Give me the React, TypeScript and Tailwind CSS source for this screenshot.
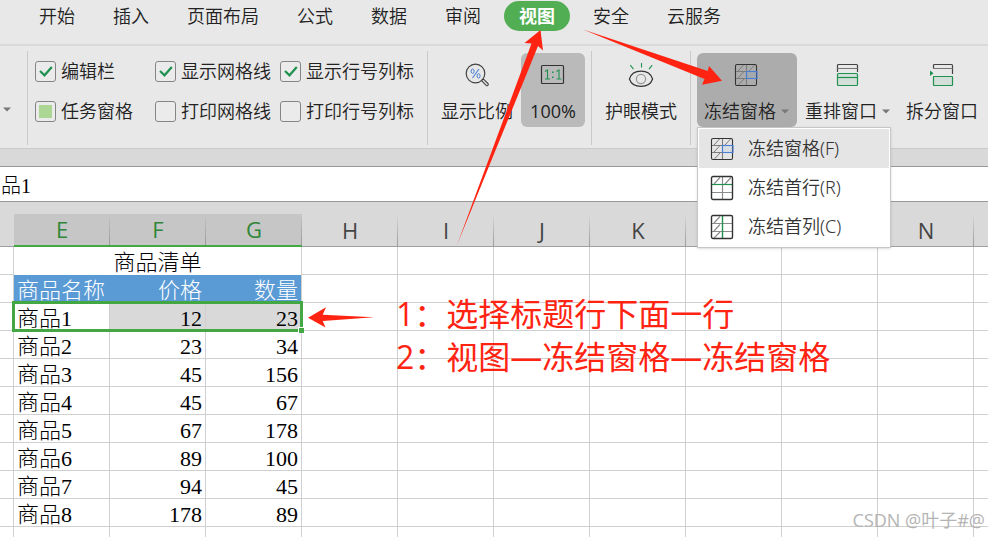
import { useState, type ReactNode } from 'react'

const tabs = ['开始', '插入', '页面布局', '公式', '数据', '审阅', '视图', '安全', '云服务']

const columns = ['E', 'F', 'G', 'H', 'I', 'J', 'K', 'L', 'M', 'N', '']

const goods = [
  { name: '商品1', price: 12, count: 23 },
  { name: '商品2', price: 23, count: 34 },
  { name: '商品3', price: 45, count: 156 },
  { name: '商品4', price: 45, count: 67 },
  { name: '商品5', price: 67, count: 178 },
  { name: '商品6', price: 89, count: 100 },
  { name: '商品7', price: 94, count: 45 },
  { name: '商品8', price: 178, count: 89 },
]

const toggles = [
  { label: '编辑栏', state: 'on' },
  { label: '显示网格线', state: 'on' },
  { label: '显示行号列标', state: 'on' },
  { label: '任务窗格', state: 'partial' },
  { label: '打印网格线', state: 'off' },
  { label: '打印行号列标', state: 'off' },
]

function ZoomIcon() {
  return (
    <svg width="26" height="26" viewBox="0 0 26 26" fill="none">
      <circle cx="11.5" cy="11.5" r="9.3" stroke="#444" strokeWidth="1.2" />
      <path d="M17.5 18.5l1.8-1.6 4.6 4.6a1.2 1.2 0 0 1-1.8 1.8z" stroke="#444" strokeWidth="1.1" />
      <path d="M15 7L8.5 16" stroke="#4a7fd6" strokeWidth="1.1" />
      <ellipse cx="8.6" cy="9.2" rx="1.5" ry="2.2" stroke="#4a7fd6" />
      <ellipse cx="14.6" cy="13.9" rx="1.5" ry="2.2" stroke="#4a7fd6" />
    </svg>
  )
}

function ActualSizeIcon() {
  return (
    <svg width="26" height="26" viewBox="0 0 26 26" fill="none">
      <rect x="1.5" y="3.5" width="22" height="18" rx="1" stroke="#333" strokeWidth="1.2" />
      <path d="M5 9.5l2.5-1.5v9M5 17h5M16.5 9.5l2.5-1.5v9M16.5 17h5" stroke="#1f9150" strokeWidth="1.1" />
      <path d="M12 9.5h1.6v1.6h-1.6zM12 14.5h1.6v1.6h-1.6z" fill="#1f9150" />
    </svg>
  )
}

function EyeIcon() {
  return (
    <svg width="26" height="26" viewBox="0 0 26 26" fill="none">
      <path d="M2.3 3.2l3.2 4M13.5 1v4.5M24.2 3.2l-3.2 4" stroke="#1f9150" strokeWidth="1.1" />
      <path d="M1.4 17C3 12 7.5 9.2 13 9.2S23 12 24.6 17C23 21.8 18.5 24.4 13 24.4S3 21.8 1.4 17z" stroke="#333" strokeWidth="1.2" />
      <circle cx="13" cy="17" r="4.6" stroke="#999" strokeWidth="1.2" />
    </svg>
  )
}

function FreezePanesIcon() {
  return (
    <svg width="26" height="26" viewBox="0 0 26 26" fill="none">
      <path d="M1.5 9.5h11M1.5 16.5h11M12.5 2.5v21" stroke="#7c7c7c" strokeWidth="1.1" />
      <path d="M4 9l5.5-6M15 9l5.5-6M4 16l6-6.5M4 23.5l6-6.5" stroke="#7c7c7c" />
      <rect x="1.5" y="2.5" width="21" height="21" rx="1.5" stroke="#333" strokeWidth="1.1" />
      <rect x="12.5" y="9.5" width="10.5" height="7" fill="#4a86e8" fillOpacity="0.08" stroke="#4a7fd6" strokeWidth="1.1" />
    </svg>
  )
}

function FreezeRowIcon() {
  return (
    <svg width="26" height="26" viewBox="0 0 26 26" fill="none">
      <path d="M1.5 17.5h21M12.5 2v22" stroke="#8c8c8c" strokeWidth="1.2" />
      <path d="M4 9l6-6.5M15 9l6-6.5" stroke="#8c8c8c" strokeWidth="1.2" />
      <path d="M1.5 9.5h21" stroke="#1f9150" strokeWidth="1.2" />
      <rect x="1.5" y="1.5" width="21" height="23" rx="1.5" stroke="#333" strokeWidth="1.4" />
    </svg>
  )
}

function FreezeColumnIcon() {
  return (
    <svg width="26" height="26" viewBox="0 0 26 26" fill="none">
      <path d="M1.5 9.5h21M1.5 17.5h21" stroke="#8c8c8c" strokeWidth="1.2" />
      <path d="M4 9l6-6.5M4 17l6-6.5M4 24l6-6" stroke="#8c8c8c" strokeWidth="1.2" />
      <path d="M12.5 2v22" stroke="#1f9150" strokeWidth="1.4" />
      <rect x="1.5" y="1.5" width="21" height="23" rx="1.5" stroke="#333" strokeWidth="1.4" />
    </svg>
  )
}

function ArrangeIcon() {
  return (
    <svg width="26" height="26" viewBox="0 0 26 26" fill="none">
      <path d="M2.5 10V3.5a1 1 0 0 1 1-1h18a1 1 0 0 1 1 1V10" stroke="#444" strokeWidth="1.2" />
      <path d="M2.5 6.5h20" stroke="#777" />
      <rect x="2.5" y="11.5" width="20" height="12" rx="1" fill="#1f9150" fillOpacity="0.1" stroke="#1f9150" strokeWidth="1.2" />
      <path d="M2.5 15.5h20" stroke="#1f9150" strokeWidth="1.2" />
    </svg>
  )
}

function SplitIcon() {
  return (
    <svg width="26" height="26" viewBox="0 0 26 26" fill="none">
      <path d="M4.5 6.5V3.5a1 1 0 0 1 1-1h17a1 1 0 0 1 1 1V12" stroke="#444" strokeWidth="1.2" />
      <path d="M4.5 6.5h19" stroke="#777" />
      <path d="M1 8.5l3.5 2.8L1 14z" fill="#1f9150" />
      <rect x="4.5" y="14.5" width="19" height="9" rx="0.5" fill="#1f9150" fillOpacity="0.1" stroke="#1f9150" strokeWidth="1.2" />
    </svg>
  )
}

function Caret() {
  return (
    <svg width="9" height="5" viewBox="0 0 9 5">
      <path d="M0 0.5h8L4 4.5z" fill="#777" />
    </svg>
  )
}

function Separator() {
  return <div className="mt-[5px] h-[94px] w-px shrink-0 bg-[#c9c9c9]" />
}

function Toggle({ label, state }: { label: string; state: string }) {
  return (
    <label className="flex h-10 items-center gap-[5px]">
      <span className="relative flex">
        <input
          type="checkbox"
          defaultChecked={state === 'on'}
          className="h-[21px] w-[21px] appearance-none rounded-[3px] border border-[#858585] bg-[#ebebeb]"
        />
        {state === 'on' && (
          <svg className="absolute top-0 left-0" width="21" height="21" viewBox="0 0 21 21" fill="none">
            <path d="M5 10l4.5 4.3L16.8 6" stroke="#1f9150" strokeWidth="2.2" />
          </svg>
        )}
        {state === 'partial' && <span className="absolute top-1 left-1 h-[13px] w-[13px] bg-[#abd693]" />}
      </span>
      {label}
    </label>
  )
}

interface ToolButtonProps {
  icon: ReactNode
  label: string
  active?: string
  caret?: boolean
  onClick?: () => void
}

function ToolButton({ icon, label, active = '', caret, onClick }: ToolButtonProps) {
  return (
    <button
      onClick={onClick}
      className={`flex shrink-0 flex-col items-center gap-[11px] rounded-md px-[7px] pt-[9px] pb-1 whitespace-nowrap ${active}`}
    >
      {icon}
      <span className="flex items-center gap-[5px] leading-6">
        {label}
        {caret && <Caret />}
      </span>
    </button>
  )
}

const freezeItems = [
  { label: '冻结窗格(F)', icon: <FreezePanesIcon /> },
  { label: '冻结首行(R)', icon: <FreezeRowIcon /> },
  { label: '冻结首列(C)', icon: <FreezeColumnIcon /> },
]

function FreezeMenu() {
  return (
    <div className="absolute top-full left-0 z-10 w-[194px] border border-[#c6c6c6] bg-white p-px shadow-sm">
      {freezeItems.map((item, i) => (
        <button
          key={item.label}
          className={`flex h-[39px] w-full items-center gap-3 pl-[11px] font-['Noto_Sans','Noto_Sans_CJK_SC',sans-serif] text-[#333] ${i === 0 ? 'bg-[#e5e5e5]' : 'bg-white'}`}
        >
          {item.icon}
          {item.label}
        </button>
      ))}
    </div>
  )
}

function Ribbon() {
  const [menuOpen, setMenuOpen] = useState(true)

  return (
    <div className="flex h-[103px] items-start border-b border-[#cbcbcb] bg-[#e8e8e8]">
      <button aria-label="更多" className="flex h-[103px] w-[27px] shrink-0 items-center pt-6 pl-[3px]">
        <Caret />
      </button>
      <Separator />
      <div className="grid shrink-0 grid-cols-[120px_125px_auto] pt-[5px] pr-[13px] pl-[7px] whitespace-nowrap">
        {toggles.map((t) => (
          <Toggle key={t.label} label={t.label} state={t.state} />
        ))}
      </div>
      <Separator />
      <div className="flex shrink-0 gap-px px-[6px] pt-[7px]">
        <ToolButton icon={<ZoomIcon />} label="显示比例" />
        <ToolButton icon={<ActualSizeIcon />} label="100%" active="w-16 bg-[#bababa] font-normal" />
      </div>
      <Separator />
      <div className="flex shrink-0 px-[6px] pt-[7px]">
        <ToolButton icon={<EyeIcon />} label="护眼模式" />
      </div>
      <Separator />
      <div className="flex shrink-0 gap-px pt-[7px] pl-[6px]">
        <div className="relative">
          <ToolButton
            icon={<FreezePanesIcon />}
            label="冻结窗格"
            active="bg-[#acacac]"
            caret
            onClick={() => setMenuOpen(!menuOpen)}
          />
          {menuOpen && <FreezeMenu />}
        </div>
        <ToolButton icon={<ArrangeIcon />} label="重排窗口" caret />
        <ToolButton icon={<SplitIcon />} label="拆分窗口" />
      </div>
    </div>
  )
}

function Cell({ children, className = '' }: { children?: ReactNode; className?: string }) {
  return <td className={`h-7 border-r border-b border-[#d0d0d0] p-0 ${className}`}>{children}</td>
}

function EmptyCells({ count }: { count: number }) {
  return (
    <>
      {Array.from({ length: count }, (_, i) => (
        <Cell key={i} />
      ))}
    </>
  )
}

function Sheet() {
  return (
    <div className="flex-1 overflow-hidden bg-white">
      <div className="h-3 bg-[#d9d9d9]" />
      <table className="w-[1070px] table-fixed border-separate border-spacing-0 font-['Liberation_Serif','Noto_Sans_CJK_SC',serif] text-[22px] leading-[23px] font-light text-black">
        <colgroup>
          <col className="w-[14px]" />
          {columns.map((c) => (
            <col key={c} className="w-24" />
          ))}
        </colgroup>
        <thead>
          <tr className="font-['Open_Sans',sans-serif]">
            <th className="h-[33px] border-b border-[#a0a0a0] bg-[#d9d9d9] p-0" />
            {columns.map((c, i) => (
              <th
                key={c}
                className={`h-[33px] bg-[linear-gradient(to_bottom,transparent,#999)] bg-[length:1px_100%] bg-right bg-no-repeat p-0 font-normal ${
                  i < 3 ? 'border-b-2 border-[#43a843] bg-[#c6c6c6] text-[#2e8636]' : 'border-b border-[#a0a0a0] bg-[#d9d9d9] text-[#444]'
                }`}
              >
                {c}
              </th>
            ))}
          </tr>
        </thead>
        <tbody>
          <tr>
            <Cell />
            <td colSpan={3} className="h-7 border-r border-[#d0d0d0] p-0 pt-0.5 text-center">
              商品清单
            </td>
            <EmptyCells count={8} />
          </tr>
          <tr>
            <Cell />
            <td className="h-7 bg-[#5b9bd5] p-0 pt-0.5 pl-[3px] text-white">商品名称</td>
            <td className="bg-[#5b9bd5] p-0 pt-0.5 pr-1 text-right text-white">价格</td>
            <td className="border-r border-[#d0d0d0] bg-[#5b9bd5] p-0 pt-0.5 pr-[3px] text-right text-white">数量</td>
            <EmptyCells count={8} />
          </tr>
          {goods.map((g, i) => (
            <tr key={g.name}>
              <Cell className="relative">
                {i === 0 && (
                  <div className="absolute -top-0.5 left-3 z-10 h-[31px] w-[291px] border-3 border-[#43a843]">
                    <span className="absolute -right-1 -bottom-1 h-[6px] w-[6px] border-t border-l border-white bg-[#43a843]" />
                  </div>
                )}
              </Cell>
              <Cell className="pt-1 pl-[3px]">{g.name}</Cell>
              <Cell className={`pt-1 pr-[3px] text-right ${i === 0 ? 'bg-[#d9d9d9]' : ''}`}>{g.price}</Cell>
              <Cell className={`pt-1 pr-[3px] text-right ${i === 0 ? 'bg-[#d9d9d9]' : ''}`}>{g.count}</Cell>
              <EmptyCells count={8} />
            </tr>
          ))}
          <tr>
            <EmptyCells count={12} />
          </tr>
        </tbody>
      </table>
    </div>
  )
}

// Red tutorial marks drawn over the sheet
function Annotations() {
  return (
    <div className="pointer-events-none absolute inset-0 z-20">
      <svg className="absolute top-0 left-0" width="988" height="400" viewBox="0 0 988 400" fill="#ff2412">
        <path d="M540.5 30L524.5 43 531.5 43.5 457 245 538 46 543 50.5z" />
        <path d="M722 80.7L709 66 707.7 71 583 29.5 704.5 79 702 84.7z" />
        <path d="M308 317.7L326 307.3 322.7 314.7 374 317.3 322.7 321 325.5 327.5z" />
      </svg>
      <div className="absolute top-[292px] left-[396px] text-[32px] leading-[43px] font-normal whitespace-nowrap text-[#ff2412]">
        <p>1：选择标题行下面一行</p>
        <p>2：视图—冻结窗格—冻结窗格</p>
      </div>
      <p className="absolute right-[3px] bottom-[5px] text-[18px] leading-6 font-normal text-[#b4b4b4]">CSDN @叶子#@</p>
    </div>
  )
}

function App() {
  const [activeTab, setActiveTab] = useState('视图')

  return (
    <div className="relative flex h-screen flex-col overflow-hidden bg-[#d9d9d9] font-['Open_Sans','Noto_Sans_CJK_SC',sans-serif] text-[18px] font-[350] text-[#222]">
      <nav className="flex h-[46px] shrink-0 items-start gap-2 border-b-2 border-[#d9d9d9] bg-[#e8e8e8] pt-px pl-6">
        {tabs.map((tab) => (
          <button
            key={tab}
            onClick={() => setActiveTab(tab)}
            className={`h-[30px] rounded-full px-[15px] whitespace-nowrap ${tab === activeTab ? 'bg-[#52ae52] font-bold text-white' : ''}`}
          >
            {tab}
          </button>
        ))}
      </nav>
      <Ribbon />
      <div className="mt-[17px] shrink-0 border-y border-[#999] bg-white">
        <input
          aria-label="单元格内容"
          defaultValue="品1"
          className="block h-[34px] w-full bg-white pl-px font-['Liberation_Serif','Noto_Sans_CJK_SC',serif] text-[20px] font-light text-black outline-none"
        />
      </div>
      <Sheet />
      <Annotations />
    </div>
  )
}

export default App
